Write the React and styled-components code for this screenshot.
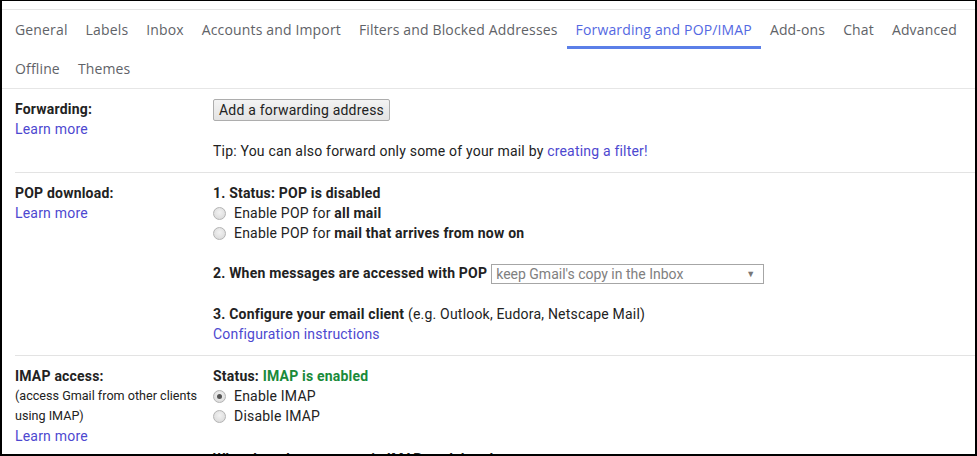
import React from 'react'
import styled, { createGlobalStyle } from 'styled-components';

const GlobalStyle = createGlobalStyle`
  html, body {
    margin: 0;
    padding: 0;
    background: #fff;
  }
  body {
    font-family: Roboto, "Liberation Sans", Arial, sans-serif;
    font-size: 14px;
    letter-spacing: 0.2px;
    color: #222;
  }
`

const tabs = [
  'General', 'Labels', 'Inbox', 'Accounts and Import', 'Filters and Blocked Addresses',
  'Forwarding and POP/IMAP', 'Add-ons', 'Chat', 'Advanced', 'Offline', 'Themes'
]

function Radio({ checked, children }) {
  return (
    <RadioRow>
      <RadioDot checked={checked} />
      <span>{children}</span>
    </RadioRow>
  )
}

export default function App() {
  return (
    <Frame>
      <GlobalStyle />
      <TabBar>
        {tabs.map((t) => (
          <Tab key={t} active={t === 'Forwarding and POP/IMAP'}>{t}</Tab>
        ))}
      </TabBar>

      <Section>
        <LabelCol>
          <Label>Forwarding:</Label>
          <Link>Learn more</Link>
        </LabelCol>
        <ValueCol>
          <Button type="button">Add a forwarding address</Button>
          <Tip>
            Tip: You can also forward only some of your mail by <Link>creating a filter!</Link>
          </Tip>
        </ValueCol>
      </Section>

      <Section>
        <LabelCol>
          <Label>POP download:</Label>
          <Link>Learn more</Link>
        </LabelCol>
        <ValueCol>
          <Line><b>1. Status: POP is disabled</b></Line>
          <Radio>Enable POP for <b>all mail</b></Radio>
          <Radio>Enable POP for <b>mail that arrives from now on</b></Radio>
          <Group>
            <b>2. When messages are accessed with POP</b>
            <Select>
              <span>keep Gmail's copy in the Inbox</span>
              <Arrow>▼</Arrow>
            </Select>
          </Group>
          <Group>
            <b>3. Configure your email client</b> (e.g. Outlook, Eudora, Netscape Mail)
          </Group>
          <Line><Link>Configuration instructions</Link></Line>
        </ValueCol>
      </Section>

      <Section>
        <LabelCol>
          <Label>IMAP access:</Label>
          <SubNote>(access Gmail from other clients using IMAP)</SubNote>
          <Link>Learn more</Link>
        </LabelCol>
        <ValueCol>
          <Line><b>Status: <Green>IMAP is enabled</Green></b></Line>
          <Radio checked>Enable IMAP</Radio>
          <Radio>Disable IMAP</Radio>
          <Group $extra>
            <b>When I mark a message in IMAP as deleted:</b>
          </Group>
        </ValueCol>
      </Section>
    </Frame>
  )
}

const Frame = styled.div`
  width: 977px;
  height: 456px;
  box-sizing: border-box;
  border: 2px solid #000;
  border-top-width: 1px;
  overflow: hidden;
`

const TabBar = styled.div`
  margin-top: 8px;
  display: flex;
  flex-wrap: wrap;
  padding-left: 4px;
  border-top: 1px solid #e6e6e6;
  border-bottom: 1px solid #e6e6e6;
`

const Tab = styled.div`
  height: 39px;
  box-sizing: border-box;
  padding: 2px 9px 0;
  display: flex;
  align-items: center;
  font-family: "Open Sans", Roboto, sans-serif;
  font-size: 14px;
  font-weight: 500;
  letter-spacing: 0.15px;
  color: ${(p) => (p.active ? '#5468e2' : '#5f6368')};
  border-bottom: 3px solid ${(p) => (p.active ? '#5b7fe8' : 'transparent')};
  white-space: nowrap;
`

const Section = styled.div`
  margin-left: 13px;
  padding: 10px 0 11px;
  display: grid;
  grid-template-columns: 198px 1fr;
  border-bottom: 1px solid #e3e3e3;
  line-height: 20px;
`

const LabelCol = styled.div`
  display: flex;
  flex-direction: column;
`

const Label = styled.div`
  font-weight: bold;
  color: #222;
`

const SubNote = styled.div`
  font-size: 12.6px;
  letter-spacing: 0;
  color: #222;
  padding-right: 10px;
`

const Link = styled.span`
  color: #4d48d0;
  cursor: pointer;
`

const ValueCol = styled.div`
  display: flex;
  flex-direction: column;
  align-items: flex-start;
`

const Line = styled.div``

const Group = styled.div`
  margin-top: ${(p) => (p.$extra ? '23px' : '20px')};
`

const Button = styled.button`
  height: 22px;
  padding: 0 5px;
  font-family: Roboto, "Liberation Sans", sans-serif;
  font-size: 14px;
  letter-spacing: 0.2px;
  color: #222;
  background: linear-gradient(#f3f3f3, #e3e3e3);
  border: 1px solid #adadad;
  border-radius: 2px;
`

const Tip = styled.div`
  margin-top: 20px;
`

const RadioRow = styled.label`
  display: flex;
  align-items: center;
  height: 20px;
`

const RadioDot = styled.span`
  width: 11px;
  height: 11px;
  border-radius: 50%;
  border: 1px solid #b4b4b4;
  background: radial-gradient(circle at 50% 40%, #f2f2f2, #d6d6d6);
  margin-right: 8px;
  position: relative;
  &::after {
    content: '';
    display: ${(p) => (p.checked ? 'block' : 'none')};
    position: absolute;
    left: 3px;
    top: 3px;
    width: 5px;
    height: 5px;
    border-radius: 50%;
    background: #555;
  }
`

const Select = styled.span`
  display: inline-flex;
  vertical-align: middle;
  margin-left: 4px;
  width: 273px;
  height: 20px;
  box-sizing: border-box;
  border: 1px solid #a6a6a6;
  padding: 0 8px 0 4px;
  align-items: center;
  justify-content: space-between;
  color: #808080;
  font-size: 14px;
  letter-spacing: 0;
`

const Arrow = styled.span`
  font-size: 9px;
  color: #777;
`

const Green = styled.span`
  color: #1a8a3a;
`
